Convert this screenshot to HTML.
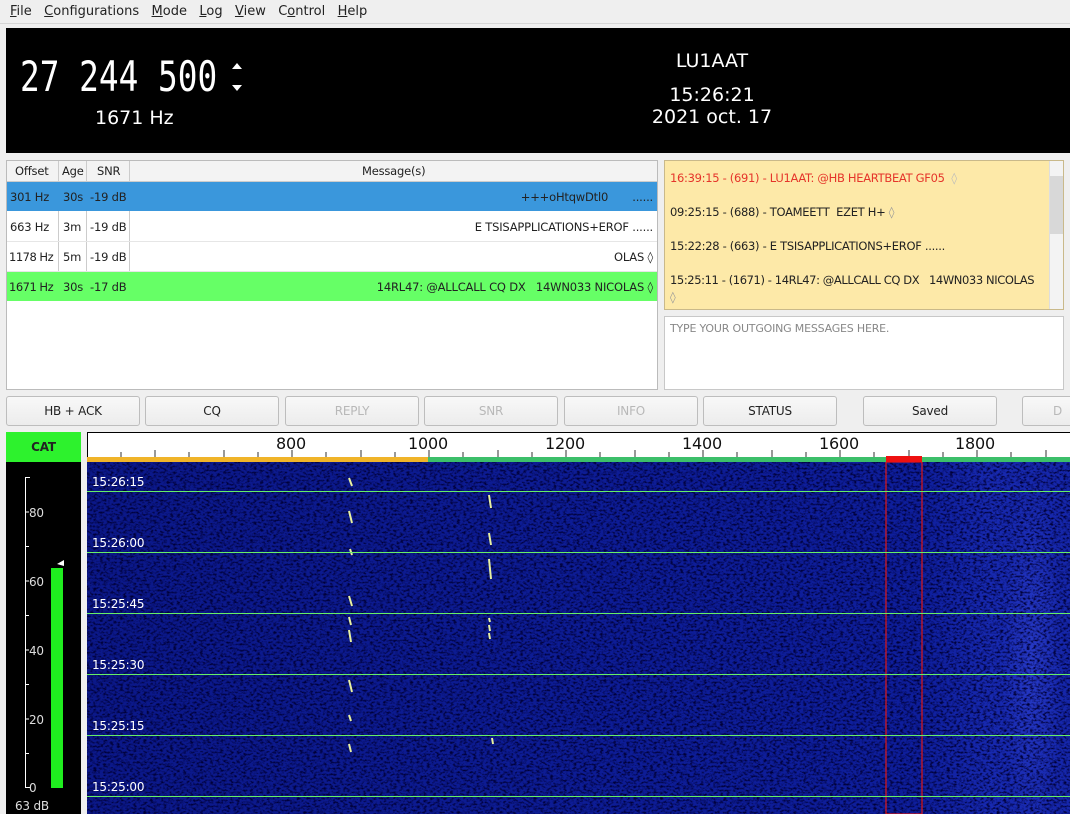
<!DOCTYPE html>
<html><head><meta charset="utf-8"><style>
*{margin:0;padding:0;box-sizing:border-box}
body{width:1070px;height:814px;overflow:hidden;background:#efefef;font-family:"DejaVu Sans","Liberation Sans",sans-serif;font-size:11.5px;letter-spacing:-0.2px;color:#222;position:relative}
.a{position:absolute}
.btn{position:absolute;top:396px;height:30px;width:134px;border:1px solid #bdbdbd;border-radius:3px;background:linear-gradient(#f8f8f8,#ececec);text-align:center;line-height:28px;font-size:12px}
.dis{color:#b8b8b8}
.tl{position:absolute;left:92px;color:#fff;font-size:12px}
.hl{position:absolute;left:87px;width:983px;height:1px;background:#66ee66}
</style></head><body>
<div class="a" style="left:0;top:0;width:1070px;height:24px;border-bottom:1px solid #d6d6d6;background:#efefef"></div>
<div class="a" style="left:10px;top:4px;font-size:13px;letter-spacing:0;white-space:pre"><u>F</u>ile   <u>C</u>onfigurations   <u>M</u>ode   <u>L</u>og   <u>V</u>iew   C<u>o</u>ntrol   <u>H</u>elp</div>

<div class="a" style="left:6px;top:28px;width:1064px;height:125px;background:#000"></div>
<div class="a" style="left:20px;top:54px;color:#fff;font-family:'DejaVu Sans Mono',monospace;font-size:42px;letter-spacing:0;transform:scaleX(0.78);transform-origin:left;line-height:46px">27 244 500</div>
<svg class="a" style="left:230px;top:60px" width="14" height="34"><path d="M2 9 L7 3 L12 9Z M2 25 L7 31 L12 25Z" fill="#fff"/></svg>
<div class="a" style="left:95px;top:107px;color:#fff;font-size:19px;letter-spacing:0">1671 Hz</div>
<div class="a" style="left:600px;top:50px;width:224px;text-align:center;color:#fff;font-size:19px;letter-spacing:0;line-height:22px">LU1AAT<br><div style="height:12px"></div>15:26:21<br>2021 oct. 17</div>

<div class="a" style="left:6px;top:160px;width:652px;height:230px;background:#fff;border:1px solid #bbb"></div>
<div class="a" style="left:7px;top:161px;width:650px;height:21px;background:#f3f3f3;border-bottom:1px solid #ccc"></div>
<div class="a" style="left:15px;top:164px">Offset</div><div class="a" style="left:62px;top:164px">Age</div><div class="a" style="left:97px;top:164px">SNR</div>
<div class="a" style="left:362px;top:164px">Message(s)</div>
<div class="a" style="left:58px;top:161px;width:1px;height:140px;background:#ccc"></div>
<div class="a" style="left:86px;top:161px;width:1px;height:140px;background:#ccc"></div>
<div class="a" style="left:129px;top:161px;width:1px;height:140px;background:#ccc"></div>
<div class="a" style="left:7px;top:182px;width:650px;height:29px;background:#3a97dc"></div>
<div class="a" style="left:7px;top:272px;width:650px;height:29px;background:#66ff66"></div>
<div class="a" style="left:7px;top:241px;width:650px;height:1px;background:#e6e6e6"></div>
<div class="a" style="left:7px;top:271px;width:650px;height:1px;background:#e6e6e6"></div>
<div class="a" style="left:10px;top:190px">301 Hz</div><div class="a" style="left:63px;top:190px">30s</div><div class="a" style="left:90px;top:190px">-19 dB</div><div class="a" style="right:417px;top:190px;white-space:pre">+++oHtqwDtl0       ......</div>
<div class="a" style="left:10px;top:220px">663 Hz</div><div class="a" style="left:63px;top:220px">3m</div><div class="a" style="left:90px;top:220px">-19 dB</div><div class="a" style="right:417px;top:220px">E TSISAPPLICATIONS+EROF ......</div>
<div class="a" style="left:9px;top:250px;letter-spacing:-0.5px">1178 Hz</div><div class="a" style="left:63px;top:250px">5m</div><div class="a" style="left:90px;top:250px">-19 dB</div><div class="a" style="right:417px;top:250px">OLAS ◊</div>
<div class="a" style="left:9px;top:280px;letter-spacing:-0.5px">1671 Hz</div><div class="a" style="left:63px;top:280px">30s</div><div class="a" style="left:90px;top:280px">-17 dB</div><div class="a" style="right:417px;top:280px;white-space:pre">14RL47: @ALLCALL CQ DX   14WN033 NICOLAS ◊</div>

<div class="a" style="left:664px;top:160px;width:400px;height:150px;background:#fde9a8;border:1px solid #c9b98a"></div>
<div class="a" style="left:1049px;top:161px;width:14px;height:148px;background:#f3f3f3;border-left:1px solid #ddd"></div>
<div class="a" style="left:1050px;top:176px;width:13px;height:58px;background:#d8d8d8"></div>
<div class="a" style="left:670px;top:171px;color:#e5342a;font-size:11.5px;letter-spacing:-0.3px">16:39:15 - (691) - LU1AAT: @HB HEARTBEAT GF05 &nbsp;<span style="color:#bbb">◊</span></div>
<div class="a" style="left:670px;top:205px;letter-spacing:-0.3px">09:25:15 - (688) - TOAMEETT &nbsp;EZET H+ <span style="color:#999">◊</span></div>
<div class="a" style="left:670px;top:239px;letter-spacing:-0.3px">15:22:28 - (663) - E TSISAPPLICATIONS+EROF ......</div>
<div class="a" style="left:670px;top:272px;line-height:17px;letter-spacing:-0.4px;white-space:nowrap">15:25:11 - (1671) - 14RL47: @ALLCALL CQ DX &nbsp; 14WN033 NICOLAS<br><span style="color:#999">◊</span></div>
<div class="a" style="left:664px;top:316px;width:400px;height:74px;background:#fff;border:1px solid #c8c8c8"></div>
<div class="a" style="left:670px;top:322px;color:#888;font-size:11px">TYPE YOUR OUTGOING MESSAGES HERE.</div>

<div class="btn" style="left:6px">HB + ACK</div>
<div class="btn" style="left:145px">CQ</div>
<div class="btn dis" style="left:285px">REPLY</div>
<div class="btn dis" style="left:424px">SNR</div>
<div class="btn dis" style="left:564px">INFO</div>
<div class="btn" style="left:703px">STATUS</div>
<div class="btn" style="left:863px">Saved</div>
<div class="btn dis" style="left:1022px;text-align:left;padding-left:30px">D</div>

<div class="a" style="left:6px;top:432px;width:75px;height:30px;background:#2df22d;text-align:center;line-height:30px;font-weight:bold;font-size:12px">CAT</div>
<div class="a" style="left:6px;top:462px;width:75px;height:352px;background:#000"></div>
<svg class="a" style="left:6px;top:462px" width="75" height="352">
<g stroke="#fff" stroke-width="1" fill="none"><path d="M19.5 15 V325.5 H24 M19.5 15.5 H24 M19.5 50 H23 M19.5 84.5 H23 M19.5 119 H23 M19.5 153.5 H23 M19.5 188 H23 M19.5 222.5 H23 M19.5 257 H23 M19.5 291.5 H23"/></g>
<g fill="#ddd" font-size="12" font-family="DejaVu Sans,sans-serif"><text x="23" y="55">80</text><text x="23" y="124">60</text><text x="23" y="193">40</text><text x="23" y="262">20</text><text x="23" y="330">0</text><text x="9" y="348">63 dB</text></g>
<rect x="45" y="106" width="12" height="220" fill="#1fee1f"/>
<path d="M51 102 L58 98 L58 104Z" fill="#fff"/>
</svg>

<div class="a" style="left:87px;top:432px;width:983px;height:25px;background:#fff;border-top:1px solid #000;border-left:1px solid #000"></div>
<svg class="a" style="left:87px;top:432px" width="983" height="30">
<g stroke="#333"><path d="M34 20V25M68 18V25M102 20V25M137 18V25M171 20V25M205 18V25M239 20V25M274 18V25M308 20V25M342 18V25M376 20V25M411 18V25M445 20V25M479 18V25M513 20V25M548 18V25M582 20V25M616 18V25M650 20V25M685 18V25M719 20V25M753 18V25M787 20V25M822 18V25M856 20V25M890 18V25M924 20V25M959 18V25"/></g>
<g font-size="16" font-family="DejaVu Sans,sans-serif" fill="#111" text-anchor="middle"><text x="204" y="17">800</text><text x="341" y="17">1000</text><text x="478" y="17">1200</text><text x="615" y="17">1400</text><text x="752" y="17">1600</text><text x="888" y="17">1800</text></g>
<rect x="0" y="25" width="341" height="5" fill="#f0b429"/><rect x="341" y="25" width="642" height="5" fill="#3cbf6a"/><rect x="799" y="24" width="36" height="6" fill="#ee1111"/>
</svg>

<div class="a" style="left:87px;top:462px;width:983px;height:352px;background:
radial-gradient(ellipse 30px 180px at 945px 200px,rgba(60,80,230,.45),transparent),
linear-gradient(90deg,#0b1889 0,#0d1c95 50%,#0e1e9c 85%,#1729b0 92%,#1526aa 100%)"></div>
<svg class="a" style="left:87px;top:462px" width="983" height="352">
<defs><filter id="n"><feTurbulence type="fractalNoise" baseFrequency="0.3 0.5" numOctaves="2" seed="3"/><feColorMatrix values="0 0 0 0 0  0 0 0 0 0  0 0 0 0 0.04  0 0 0 -3 1.7"/></filter></defs>
<rect width="983" height="352" filter="url(#n)" opacity="1"/>
<g stroke="#e8f0a0" stroke-width="2"><path d="M262 16l3 8M262 49l3 12M263 87l2 6M262 134l3 10M262 155l2 8M262 168l2 12M262 218l3 12M262 253l2 6M262 282l2 8M402 33l2 13M402 71l2 12M402 97l2 20M402 156l1 4M402 163l1 6M402 171l1 6M405 276l1 6"/></g>
<rect x="799" y="0" width="36" height="352" fill="none" stroke="#e01818" stroke-width="1.2"/>
</svg>
<div class="hl" style="top:491px"></div><div class="hl" style="top:552px"></div><div class="hl" style="top:613px"></div><div class="hl" style="top:674px"></div><div class="hl" style="top:735px"></div><div class="hl" style="top:796px"></div>
<div class="tl" style="top:475px">15:26:15</div><div class="tl" style="top:536px">15:26:00</div><div class="tl" style="top:597px">15:25:45</div><div class="tl" style="top:658px">15:25:30</div><div class="tl" style="top:719px">15:25:15</div><div class="tl" style="top:780px">15:25:00</div>
</body></html>
